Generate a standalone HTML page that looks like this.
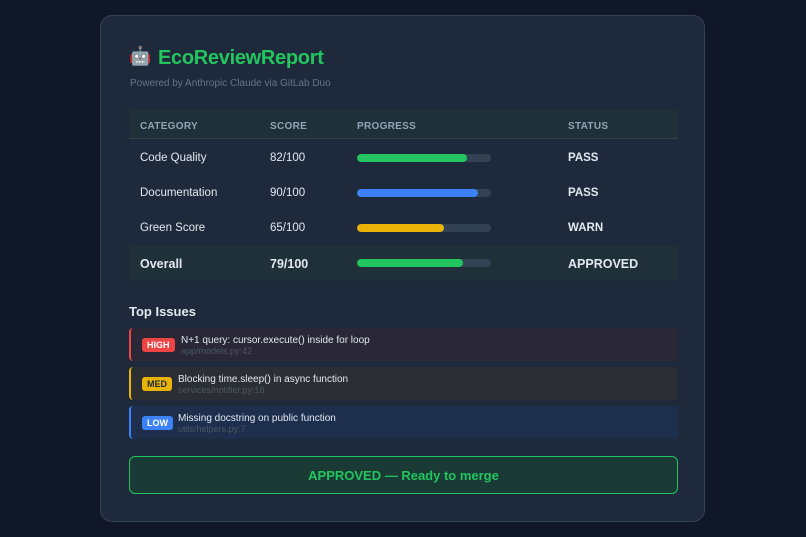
<!DOCTYPE html>
<html><head><meta charset="utf-8"><style>
*{margin:0;padding:0;box-sizing:border-box}
body{width:806px;height:537px;background:#0f1729;font-family:"Liberation Sans",sans-serif;color:#e2e8f0;position:relative;overflow:hidden}
.card{position:absolute;left:100px;top:15px;width:605px;height:507px;background:#1e293b;border:1px solid #334155;border-radius:12px}
.abs{position:absolute}
h1{position:absolute;left:57px;top:31px;font-size:20px;font-weight:bold;color:#22c55e;letter-spacing:-0.3px}
.sub{left:29px;top:62px;font-size:10px;color:#64748b}
.hdr{left:28px;top:94px;width:549px;height:29px;background:#1f3039;border-bottom:1px solid #334155}
.th{font-size:10px;font-weight:bold;color:#94a3b8;letter-spacing:.3px;top:105px}
.td{font-size:11.5px;color:#e2e8f0}
.bar{width:134px;height:8px;background:#334155;border-radius:4px;overflow:hidden}
.bar div{height:8px;border-radius:4px}
.ov{left:28px;top:230px;width:549px;height:35px;background:#1f3039}
.iss{left:28px;width:549px;height:33px;border-radius:4px}
.tag{position:absolute;left:11px;top:10px;font-size:9px;font-weight:bold;padding:2px 5px;border-radius:3px}
.it{position:absolute;font-size:10px;color:#e2e8f0;top:7px}
.if{position:absolute;font-size:9px;color:#4b5563;top:18px}
</style></head><body>
<div class="card">
<div class="abs" style="left:28px;top:30px;font-size:18px">🤖</div>
<h1>EcoReviewReport</h1>
<div class="abs sub">Powered by Anthropic Claude via GitLab Duo</div>
<div class="abs hdr"></div>
<div class="abs th" style="left:39px">CATEGORY</div>
<div class="abs th" style="left:169px">SCORE</div>
<div class="abs th" style="left:256px">PROGRESS</div>
<div class="abs th" style="left:467px">STATUS</div>

<div class="abs td" style="left:39px;top:136px">Code Quality</div>
<div class="abs td" style="left:169px;top:136px">82/100</div>
<div class="abs bar" style="left:256px;top:138px"><div style="width:82%;background:#22c55e"></div></div>
<div class="abs td" style="left:467px;top:136px;font-weight:bold">PASS</div>

<div class="abs td" style="left:39px;top:171px">Documentation</div>
<div class="abs td" style="left:169px;top:171px">90/100</div>
<div class="abs bar" style="left:256px;top:173px"><div style="width:90%;background:#3b82f6"></div></div>
<div class="abs td" style="left:467px;top:171px;font-weight:bold">PASS</div>

<div class="abs td" style="left:39px;top:206px">Green Score</div>
<div class="abs td" style="left:169px;top:206px">65/100</div>
<div class="abs bar" style="left:256px;top:208px"><div style="width:65%;background:#eab308"></div></div>
<div class="abs td" style="left:467px;top:206px;font-weight:bold">WARN</div>

<div class="abs ov"></div>
<div class="abs td" style="left:39px;top:241px;font-weight:bold;font-size:12.5px">Overall</div>
<div class="abs td" style="left:169px;top:241px;font-weight:bold;font-size:12.5px">79/100</div>
<div class="abs bar" style="left:256px;top:243px"><div style="width:79%;background:#22c55e"></div></div>
<div class="abs td" style="left:467px;top:241px;font-weight:bold;font-size:12.5px">APPROVED</div>

<div class="abs" style="left:28px;top:288px;font-size:13px;font-weight:bold">Top Issues</div>

<div class="abs iss" style="top:312px;background:#2a2836;border-left:2px solid #ef4444">
<span class="tag" style="background:#ef4444;color:#fff">HIGH</span>
<span class="it" style="left:50px">N+1 query: cursor.execute() inside for loop</span>
<span class="if" style="left:50px">app/models.py:42</span></div>
<div class="abs iss" style="top:351px;background:#2b2f33;border-left:2px solid #eab308">
<span class="tag" style="background:#eab308;color:#1e293b">MED</span>
<span class="it" style="left:47px">Blocking time.sleep() in async function</span>
<span class="if" style="left:47px">services/notifier.py:18</span></div>
<div class="abs iss" style="top:390px;background:#1e2f4d;border-left:2px solid #3b82f6">
<span class="tag" style="background:#3b82f6;color:#fff">LOW</span>
<span class="it" style="left:47px">Missing docstring on public function</span>
<span class="if" style="left:47px">utils/helpers.py:7</span></div>

<div class="abs" style="left:28px;top:440px;width:549px;height:38px;border:1px solid #22c55e;border-radius:6px;background:#1a3a36;color:#22c55e;font-weight:bold;font-size:13px;text-align:center;line-height:37px">APPROVED — Ready to merge</div>
</div>
</body></html>
